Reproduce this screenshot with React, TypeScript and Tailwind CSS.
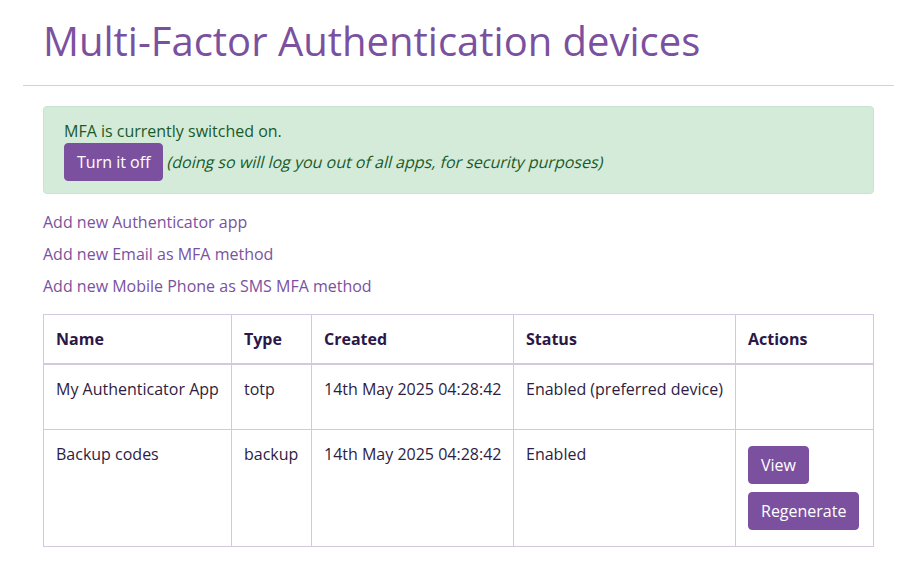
import type { FC } from 'react';

const rows = [
    {
        name: 'My Authenticator App',
        type: 'totp',
        created: '14th May 2025 04:28:42',
        status: 'Enabled (preferred device)',
        actions: false
    },
    {
        name: 'Backup codes',
        type: 'backup',
        created: '14th May 2025 04:28:42',
        status: 'Enabled',
        actions: true
    }
];

const btn =
    'bg-[#7b519f] text-white px-3 py-1.5 rounded-[4px] border border-[#7b519f] leading-6 cursor-pointer';

const cell = 'border border-[#d3c8e0] px-3 whitespace-nowrap';

const App: FC = () => {
    return (
        <div className="min-h-screen bg-white px-[23px] font-['Open_Sans',sans-serif] text-base text-[#2e1c43]">
            <h1 className="pt-[13px] pb-[16px] px-5 text-[40px] leading-[56px] text-[#7b519f]">
                Multi-Factor Authentication devices
            </h1>
            <hr className="border-0 border-t border-[#d8cce6]" />
            <div className="px-5 pt-5">
                <div className="bg-[#d4ebd9] border border-[#c5e5cd] rounded-[4px] px-5 py-3 text-[#1a5a2a] leading-6">
                    <p>MFA is currently switched on.</p>
                    <div className="flex items-center">
                        <button className={btn}>Turn it off</button>
                        {/* synthetic oblique, as the original renders it */}
                        <span className="ml-[5px] inline-block -skew-x-[14deg]">
                            (doing so will log you out of all apps, for
                            security purposes)
                        </span>
                    </div>
                </div>
                <div className="flex flex-col gap-2 mt-[16px] text-[#7b519f] leading-6">
                    <a href="#">Add new Authenticator app</a>
                    <a href="#">Add new Email as MFA method</a>
                    <a href="#">Add new Mobile Phone as SMS MFA method</a>
                </div>
                <table className="mt-4 w-full table-fixed border-collapse border border-[#d3c8e0] leading-6">
                    <thead>
                        <tr className="border-b-2 border-[#d3c8e0] text-left font-semibold text-[#2c1747]">
                            <th className={`${cell} w-[188px] py-3`}>Name</th>
                            <th className={`${cell} w-[80px] py-3`}>Type</th>
                            <th className={`${cell} w-[202px] py-3`}>Created</th>
                            <th className={`${cell} w-[222px] py-3`}>Status</th>
                            <th className={`${cell} py-3`}>Actions</th>
                        </tr>
                    </thead>
                    <tbody>
                        {rows.map((r) => (
                            <tr key={r.name} className="align-top">
                                <td className={`${cell} pt-3 pb-7`}>{r.name}</td>
                                <td className={`${cell} pt-3`}>{r.type}</td>
                                <td className={`${cell} pt-3`}>{r.created}</td>
                                <td className={`${cell} pt-3`}>{r.status}</td>
                                <td className={`${cell} pt-4 pb-4`}>
                                    {r.actions ? (
                                        <div className="flex flex-col items-start gap-2">
                                            <button className={btn}>View</button>
                                            <button className={btn}>
                                                Regenerate
                                            </button>
                                        </div>
                                    ) : null}
                                </td>
                            </tr>
                        ))}
                    </tbody>
                </table>
            </div>
        </div>
    );
};

export default App;
